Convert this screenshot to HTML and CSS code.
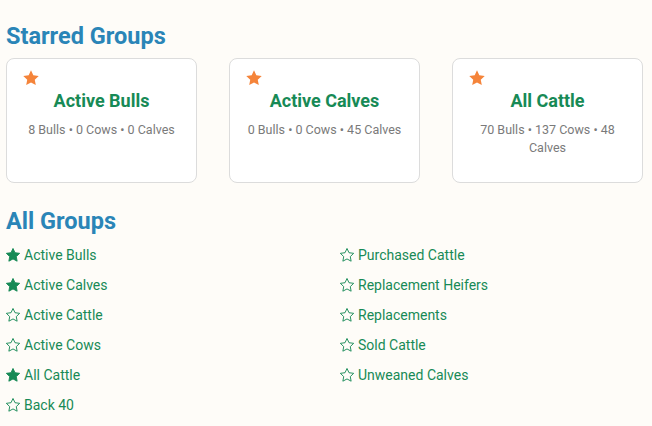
FILE: index.html
```html
<!DOCTYPE html>
<html>
<head>
<meta charset="utf-8">
<link rel="stylesheet" href="styles.css">
</head>
<body>
<section class="section">
  <h2 class="heading">Starred Groups</h2>
  <div class="cards">
    <div class="card">
      <svg class="card-star" viewBox="0 0 24 24"><path d="M12 1.8l3.1 6.6 7.2.9-5.3 5 1.4 7.1L12 17.9l-6.4 3.5 1.4-7.1-5.3-5 7.2-.9z"/></svg>
      <div class="card-title">Active Bulls</div>
      <div class="card-sub">8 Bulls • 0 Cows • 0 Calves</div>
    </div>
    <div class="card">
      <svg class="card-star" viewBox="0 0 24 24"><path d="M12 1.8l3.1 6.6 7.2.9-5.3 5 1.4 7.1L12 17.9l-6.4 3.5 1.4-7.1-5.3-5 7.2-.9z"/></svg>
      <div class="card-title">Active Calves</div>
      <div class="card-sub">0 Bulls • 0 Cows • 45 Calves</div>
    </div>
    <div class="card">
      <svg class="card-star" viewBox="0 0 24 24"><path d="M12 1.8l3.1 6.6 7.2.9-5.3 5 1.4 7.1L12 17.9l-6.4 3.5 1.4-7.1-5.3-5 7.2-.9z"/></svg>
      <div class="card-title">All Cattle</div>
      <div class="card-sub">70 Bulls • 137 Cows • 48 Calves</div>
    </div>
  </div>
</section>
<section class="section">
  <h2 class="heading">All Groups</h2>
  <ul class="groups">
    <li class="group"><svg class="gstar filled" viewBox="0 0 24 24"><path d="M12 2.2l3 6.4 7 .9-5.1 4.9 1.3 6.9L12 17.9l-6.2 3.4 1.3-6.9L2 9.5l7-.9z"/></svg>Active Bulls</li>
    <li class="group"><svg class="gstar filled" viewBox="0 0 24 24"><path d="M12 2.2l3 6.4 7 .9-5.1 4.9 1.3 6.9L12 17.9l-6.2 3.4 1.3-6.9L2 9.5l7-.9z"/></svg>Active Calves</li>
    <li class="group"><svg class="gstar" viewBox="0 0 24 24"><path d="M12 2.2l3 6.4 7 .9-5.1 4.9 1.3 6.9L12 17.9l-6.2 3.4 1.3-6.9L2 9.5l7-.9z"/></svg>Active Cattle</li>
    <li class="group"><svg class="gstar" viewBox="0 0 24 24"><path d="M12 2.2l3 6.4 7 .9-5.1 4.9 1.3 6.9L12 17.9l-6.2 3.4 1.3-6.9L2 9.5l7-.9z"/></svg>Active Cows</li>
    <li class="group"><svg class="gstar filled" viewBox="0 0 24 24"><path d="M12 2.2l3 6.4 7 .9-5.1 4.9 1.3 6.9L12 17.9l-6.2 3.4 1.3-6.9L2 9.5l7-.9z"/></svg>All Cattle</li>
    <li class="group"><svg class="gstar" viewBox="0 0 24 24"><path d="M12 2.2l3 6.4 7 .9-5.1 4.9 1.3 6.9L12 17.9l-6.2 3.4 1.3-6.9L2 9.5l7-.9z"/></svg>Back 40</li>
    <li class="group"><svg class="gstar" viewBox="0 0 24 24"><path d="M12 2.2l3 6.4 7 .9-5.1 4.9 1.3 6.9L12 17.9l-6.2 3.4 1.3-6.9L2 9.5l7-.9z"/></svg>Purchased Cattle</li>
    <li class="group"><svg class="gstar" viewBox="0 0 24 24"><path d="M12 2.2l3 6.4 7 .9-5.1 4.9 1.3 6.9L12 17.9l-6.2 3.4 1.3-6.9L2 9.5l7-.9z"/></svg>Replacement Heifers</li>
    <li class="group"><svg class="gstar" viewBox="0 0 24 24"><path d="M12 2.2l3 6.4 7 .9-5.1 4.9 1.3 6.9L12 17.9l-6.2 3.4 1.3-6.9L2 9.5l7-.9z"/></svg>Replacements</li>
    <li class="group"><svg class="gstar" viewBox="0 0 24 24"><path d="M12 2.2l3 6.4 7 .9-5.1 4.9 1.3 6.9L12 17.9l-6.2 3.4 1.3-6.9L2 9.5l7-.9z"/></svg>Sold Cattle</li>
    <li class="group"><svg class="gstar" viewBox="0 0 24 24"><path d="M12 2.2l3 6.4 7 .9-5.1 4.9 1.3 6.9L12 17.9l-6.2 3.4 1.3-6.9L2 9.5l7-.9z"/></svg>Unweaned Calves</li>
  </ul>
</section>
</body>
</html>
```
FILE: styles.css
```css
html, body {
  margin: 0;
  padding: 0;
  background: #fefcf8;
}
body {
  font-family: Roboto, "Liberation Sans", sans-serif;
  padding: 21px 6px 0 6px;
}
.section {
  margin: 0;
}
.heading {
  margin: 0;
  font-size: 23.5px;
  line-height: 30px;
  font-weight: 700;
  color: #2a85b7;
}
.cards {
  display: grid;
  grid-template-columns: repeat(3, 191px);
  column-gap: 32px;
  margin-top: 7px;
  margin-bottom: 23px;
}
.card {
  height: 125px;
  box-sizing: border-box;
  background: #ffffff;
  border: 1px solid #dcdcdc;
  border-radius: 8px;
  padding: 10px 16px 12px 16px;
  text-align: center;
}
.card-star {
  display: block;
  width: 18px;
  height: 18px;
  fill: #f5843a;
  margin-left: -1px;
}
.card-title {
  font-size: 18px;
  font-weight: 700;
  line-height: 22px;
  color: #178a56;
  margin-top: 3px;
}
.card-sub {
  font-size: 12.5px;
  line-height: 18px;
  color: #7a7a7a;
  margin-top: 9px;
}
.groups {
  list-style: none;
  margin: 4px 0 0 0;
  padding: 0;
  display: grid;
  grid-template-columns: 1fr 1fr;
  grid-template-rows: repeat(6, 30px);
  grid-auto-flow: column;
  column-gap: 28px;
}
.group {
  display: flex;
  align-items: center;
  font-size: 14px;
  color: #178a56;
}
.gstar {
  width: 16px;
  height: 16px;
  margin-right: 3px;
  margin-left: -1px;
  fill: none;
  stroke: #178a56;
  stroke-width: 1.4;
  stroke-linejoin: round;
}
.gstar.filled {
  fill: #178a56;
}
```
